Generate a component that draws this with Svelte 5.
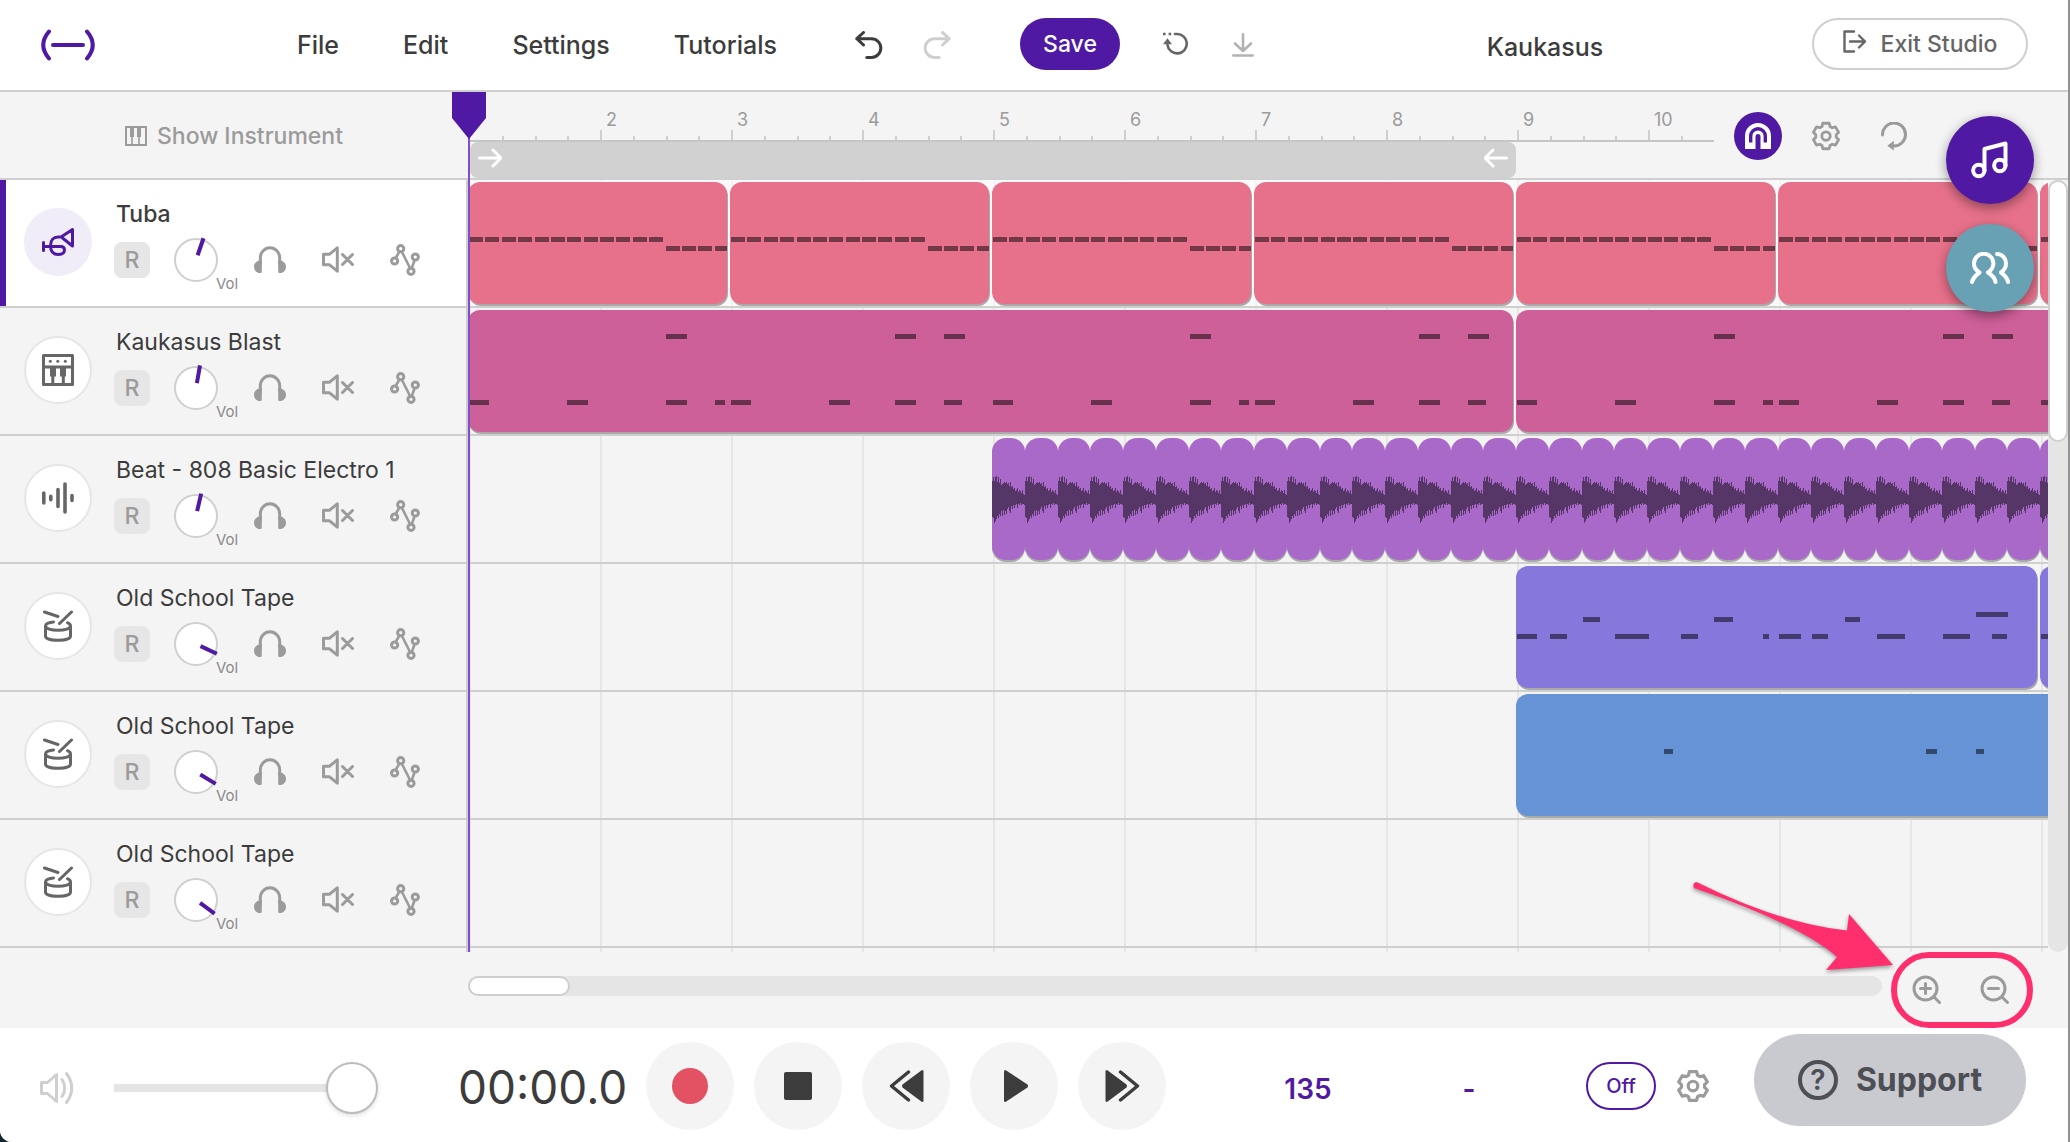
<script>
	const BAR = 131; // width of one bar in pixels

	let masterVolume = $state(100);
	let tempo = $state('135');
	let selected = $state(0);

	const menu = ['File', 'Edit', 'Settings', 'Tutorials'];

	// notes are [start in bars, width in px, top in px]
	const tubaNotes = Array.from({ length: 16 }, (_, i) => [i / 8, 14, i < 12 ? 55 : 64]);

	const blastNotes = [
		[1.5, 21, 24],
		[3.25, 21, 24],
		[3.625, 21, 24],
		[0, 20, 90],
		[0.75, 21, 90],
		[1.5, 21, 90],
		[1.875, 10, 90],
		[2, 20, 90],
		[2.75, 21, 90],
		[3.25, 21, 90],
		[3.625, 18, 90]
	];

	const tapeNotes = [
		[0, 20, 68],
		[0.25, 17, 68],
		[0.75, 34, 68],
		[1.25, 17, 68],
		[1.875, 6, 68],
		[2, 22, 68],
		[2.25, 16, 68],
		[2.75, 28, 68],
		[3.25, 27, 68],
		[3.625, 15, 68],
		[0.5, 17, 51],
		[1.5, 19, 51],
		[2.5, 15, 51],
		[3.5, 16, 46],
		[3.625, 16, 46]
	];

	function shift(notes, bars) {
		return notes.map(([at, width, top]) => [at + bars, width, top]);
	}

	const tracks = [
		{
			name: 'Tuba',
			icon: 'tuba',
			angle: 19,
			color: '#e7718b',
			clips: [0, 2, 4, 6, 8, 10, 12].map((at) => ({ at, bars: 2, notes: tubaNotes }))
		},
		{
			name: 'Kaukasus Blast',
			icon: 'synth',
			angle: 10,
			color: '#ce6099',
			clips: [0, 8].map((at) => ({ at, bars: 8, notes: [...blastNotes, ...shift(blastNotes, 4)] }))
		},
		{
			name: 'Beat - 808 Basic Electro 1',
			icon: 'audio',
			angle: 13,
			color: '#a969c9',
			clips: Array.from({ length: 33 }, (_, i) => ({ at: 4 + i / 4, bars: 0.25, wave: true }))
		},
		{
			name: 'Old School Tape',
			icon: 'drum',
			angle: 115,
			color: '#8677dc',
			clips: [8, 12].map((at) => ({ at, bars: 4, notes: tapeNotes }))
		},
		{
			name: 'Old School Tape',
			icon: 'drum',
			angle: 121,
			color: '#6692d6',
			clips: [
				{
					at: 8,
					bars: 8,
					notes: [
						[1.125, 9, 55],
						[3.125, 11, 55],
						[3.5, 8, 55]
					]
				}
			]
		},
		{ name: 'Old School Tape', icon: 'drum', angle: 126, color: '#6692d6', clips: [] }
	];

	const up = [18, 22, 18, 22, 23, 17, 22, 16, 20, 14, 15, 16, 17, 16, 17, 15, 16, 13, 17, 12, 13, 10, 11, 8, 9, 11, 7, 9, 8, 6, 9, 5, 4];
	const down = [18, 19, 24, 22, 20, 17, 19, 15, 17, 12, 17, 11, 16, 12, 15, 10, 8, 12, 14, 7, 10, 6, 9, 6, 5, 9, 5, 6, 4, 6, 5, 5, 6];
	const wavePath = up.map((u, i) => `M${i} ${61 - u}h1v${u + down[i]}h-1z`).join('');

	// ticks of the ruler, four to a bar
	const ticks = Array.from({ length: 38 }, (_, i) => i / 4);

	// gear with six soft teeth
	function gear(cx, outer, inner) {
		const pts = [];
		for (let i = 0; i < 6; i++) {
			for (const [off, r] of [[-23, inner], [-14, outer], [14, outer], [23, inner]]) {
				const a = ((i * 60 - 90 + off) * Math.PI) / 180;
				pts.push(`${(cx + r * Math.cos(a)).toFixed(1)} ${(cx + r * Math.sin(a)).toFixed(1)}`);
			}
		}
		return 'M' + pts.join('L') + 'Z';
	}
	const gearPath = gear(16, 14, 11);
</script>

{#snippet gearIcon(size)}
	<svg width={size} height={size} viewBox="0 0 32 32" class="line">
		<path d={gearPath} />
		<circle cx="16" cy="16" r="4.5" />
	</svg>
{/snippet}

{#snippet trackIcon(kind)}
	<svg width="32" height="32" viewBox="0 0 32 32" class="line">
		{#if kind === 'tuba'}
			<path d="M1.5 16.5v8M1.5 20.5H18.5C21.5 20.5 22.5 22 22.5 24C22.5 27 19.5 28.500 16 28.500C11 28.500 8.500 25 8.500 19.500C8.500 14 11.500 11 16 11H19L30.500 3.500V20L20.500 12" />
		{:else if kind === 'synth'}
			<rect x="1.5" y="1.5" width="29" height="29" />
			<path d="M1.5 13H30.5M10.8 20V30M21.3 20V30" />
			<path class="solid" d="M8 13h6v9.500h-6zM18 13h6v9.500h-6z" />
			<circle class="solid" cx="8.300" cy="7.300" r="1.500" />
			<circle class="solid" cx="15.800" cy="7.300" r="1.500" />
			<circle class="solid" cx="23.300" cy="7.300" r="1.500" />
		{:else if kind === 'audio'}
			<path stroke-width="3.6" d="M1.8 11V21M8.8 14.300V17.700M16 7.500V24.500M23 2V30M30 13.500V18.500" />
		{:else}
			<path d="M2.500 2L16 6.500M29.500 2L17.500 13.500" />
			<path d="M11.500 12C6.500 12.500 3.500 14 3.500 16C3.500 18.500 9 20.300 16 20.300S28.500 18.500 28.500 16C28.500 14.500 27 13.300 25.500 12.700M3.500 16V26C3.500 28.700 9 30.300 16 30.300S28.500 28.700 28.500 26V16" />
		{/if}
	</svg>
{/snippet}

<div class="studio">
	<header class="topbar">
		<a class="logo" href="/" aria-label="Home">
			<svg width="54" height="40" viewBox="0 0 54 40">
				<path d="M8 6.500Q-3.500 20 8 33.500M46 6.500Q57.500 20 46 33.500M12 20H42" />
			</svg>
		</a>
		<nav>
			{#each menu as item}
				<button>{item}</button>
			{/each}
		</nav>
		<div class="actions">
			<button class="undo" aria-label="Undo">
				<svg width="28" height="28" viewBox="0 0 28 28" class="line">
					<path d="M8.500 1.500L1.800 7.700L8.500 14M1.800 7.700H16.500A9.300 9.300 0 0 1 16.500 26.400H11.800" />
				</svg>
			</button>
			<button class="redo" aria-label="Redo" disabled>
				<svg width="28" height="28" viewBox="0 0 28 28" class="line">
					<path d="M19.500 1.500L26.200 7.700L19.500 14M26.200 7.700H11.500A9.300 9.300 0 0 0 11.500 26.400H16.200" />
				</svg>
			</button>
			<button class="save">Save</button>
			<button class="restore" aria-label="Revert">
				<svg width="26" height="24" viewBox="0 0 26 24" class="line">
					<path stroke-width="2.6" d="M12 2H14A9.700 9.700 0 1 1 4.500 13" />
					<path class="solid" d="M4.500 6.300L0 12.300H9ZM0 .8h2.600v2.400H0zM5.600 .8h2.600v2.400H5.600z" />
				</svg>
			</button>
			<button class="download" aria-label="Download">
				<svg width="22" height="24" viewBox="0 0 22 24" class="line">
					<path stroke-width="2.600" d="M11 1.300V18M3 10.500L11 18L19 10.500M1.300 22.500H20.700" />
				</svg>
			</button>
		</div>
		<h1>Kaukasus</h1>
		<button class="exit">
			<svg width="24" height="28" viewBox="0 0 24 28" class="line">
				<path stroke-width="2.400" d="M11 1.500H1.500V21.500H11M7 11.500H22M16 5.500L22 11.500L16 17.500" />
			</svg>
			Exit Studio
		</button>
	</header>

	<main class="workspace">
		<div class="ruler-row">
			<div class="ruler-side">
				<button class="instrument">
					<svg width="22" height="20" viewBox="0 0 22 20">
						<rect x="1" y="1" width="20" height="18" fill="none" stroke="currentColor" stroke-width="2" />
						<path fill="currentColor" d="M5 1h4v10H5zM12 1h4v10h-4zM6.200 10h1.600v9H6.200zM13.200 10h1.600v9h-1.600z" />
					</svg>
					Show Instrument
				</button>
			</div>
			<div class="ruler">
				<div class="scale">
					{#each ticks as t}
						{#if t > 0}
							<span class="tick" class:major={t % 1 === 0} style:left="{1 + t * BAR}px">
								{#if t % 1 === 0}<b>{t + 1}</b>{/if}
							</span>
						{/if}
					{/each}
				</div>
				<div class="loop" style:width="{8 * BAR - 2}px">
					<svg width="24" height="20" viewBox="0 0 24 20" class="line">
						<path d="M1.500 10H22M15 2L23 10L15 18" />
					</svg>
					<svg width="24" height="20" viewBox="0 0 24 20" class="line">
						<path d="M22.500 10H2M9 2L1 10L9 18" />
					</svg>
				</div>
			</div>
			<div class="tools">
				<button class="magnet" aria-label="Snap to grid">
					<svg width="26" height="26" viewBox="0 0 26 26">
						<path fill="#fff" d="M0 26V13a13 13 0 0 1 26 0V26H15.500V13.500a2.500 2.500 0 0 0-5 0V26Z" />
						<path fill="none" stroke="#5019a3" stroke-width="3.400" d="M5.700 19.500V13a7.300 7.300 0 0 1 14.600 0v6.500" />
					</svg>
				</button>
				<button aria-label="Grid settings">{@render gearIcon(30)}</button>
				<button aria-label="Loop">
					<svg width="27" height="29" viewBox="0 0 27 29" class="line">
						<path d="M1.500 13A11.500 11.500 0 1 1 13 24" />
						<path class="solid" d="M6.300 23.800L12.800 18.700V28.500Z" />
					</svg>
				</button>
			</div>
		</div>

		<div class="arrangement">
			<div class="rows">
				{#each tracks as track, i}
					<section class="row" class:selected={selected === i}>
						<div class="track">
							<button class="avatar" aria-label="Select {track.name}" onclick={() => (selected = i)}>
								{@render trackIcon(track.icon)}
							</button>
							<div class="info">
								<h2>{track.name}</h2>
								<div class="controls">
									<button class="rec" aria-label="Arm for recording">R</button>
									<label class="knob">
										<svg width="48" height="48" viewBox="-24 -24 48 48">
											<circle r="21" fill="#fff" stroke="#cfcfcf" stroke-width="2" />
											<line y1="-5" y2="-23" stroke="#5019a3" stroke-width="4" transform="rotate({track.angle})" />
										</svg>
										<span>Vol</span>
										<input type="range" aria-label="Volume" />
									</label>
									<button aria-label="Solo">
										<svg width="32" height="27" viewBox="0 0 32 27" class="line">
											<path d="M6.300 18V12A9.700 10.300 0 0 1 25.700 12V18" />
											<path class="solid" d="M7.800 14C3 14.500 0 17 0 20.500C0 24.500 2.500 27 6 27C7.300 27 7.800 26.500 7.800 25.500ZM24.200 14C29 14.500 32 17 32 20.500C32 24.500 29.500 27 26 27C24.700 27 24.200 26.500 24.200 25.500Z" />
										</svg>
									</button>
									<button aria-label="Mute">
										<svg width="32" height="27" viewBox="0 0 32 27" class="line">
											<path d="M1.500 8.300H7.300L15.300 1.800V25.200L7.300 18.700H1.500ZM20.500 8.500L30.500 18.500M30.500 8.500L20.500 18.500" />
										</svg>
									</button>
									<button aria-label="Automation">
										<svg width="30" height="32" viewBox="0 0 30 32" class="line">
											<path stroke-width="2.600" d="M6 13.500L9.300 7.700M12 8L20 24M21.800 24L24.500 16.500" />
											<circle cx="10.700" cy="4.700" r="3.100" />
											<circle cx="4.600" cy="17" r="3.100" />
											<circle cx="25.300" cy="13" r="3.100" />
											<circle cx="21" cy="27.300" r="3.100" />
										</svg>
									</button>
								</div>
							</div>
						</div>
						<div class="lane">
							{#each track.clips as clip}
								<div
									class="clip"
									class:beat={clip.wave}
									style:left="{clip.at * BAR}px"
									style:width="{clip.bars * BAR - (clip.wave ? 0 : 3)}px"
									style:background={track.color}
								>
									{#if clip.wave}
										<svg width="33" height="122" viewBox="0 0 33 122">
											<path d={wavePath} fill="#563666" />
										</svg>
									{:else}
										{#each clip.notes as [at, width, top]}
											<i style:left="{1 + at * BAR}px" style:width="{width}px" style:top="{top}px"></i>
										{/each}
									{/if}
								</div>
							{/each}
						</div>
					</section>
				{/each}
			</div>
			<div class="vscroll"><div></div></div>
		</div>

		<div class="playhead">
			<svg width="34" height="47" viewBox="0 0 34 47"><path d="M0 0H34V26L17 47L0 26Z" fill="#5019a3" /></svg>
		</div>
	</main>

	<div class="hscroll-row">
		<div class="hscroll"><div></div></div>
		<div class="zoom">
			<button aria-label="Zoom in">
				<svg width="30" height="30" viewBox="0 0 30 30" class="line">
					<circle cx="13.500" cy="13.500" r="11.500" />
					<path d="M22 22L27.500 27.500M13.500 8.500V18.500M8.500 13.500H18.500" />
				</svg>
			</button>
			<button aria-label="Zoom out">
				<svg width="30" height="30" viewBox="0 0 30 30" class="line">
					<circle cx="13.500" cy="13.500" r="11.500" />
					<path d="M22 22L27.500 27.500M8.500 13.500H18.500" />
				</svg>
			</button>
			<svg class="arrow" width="206" height="96" viewBox="0 0 206 96">
				<path d="M5.500 1Q90 43 156 49.500L158 33L202 84L135 89L146 76Q110 44 3 7Q1 2 5.500 1Z" fill="#ff2f6e" />
			</svg>
		</div>
	</div>

	<footer class="transport">
		<div class="master">
			<svg width="34" height="34" viewBox="0 0 34 34" class="line">
				<path d="M1.500 11.500H7.500L16.500 3.500V30.500L7.500 22.500H1.500ZM22 8.500Q27.500 17 22 25.500M26.500 2.500Q37 17 26.500 31.500" />
			</svg>
			<input type="range" aria-label="Master volume" bind:value={masterVolume} />
		</div>
		<time>00:00.0</time>
		<div class="buttons">
			<button aria-label="Record">
				<svg width="36" height="36" viewBox="0 0 36 36"><circle cx="18" cy="18" r="18" fill="#e25263" /></svg>
			</button>
			<button aria-label="Stop">
				<svg width="28" height="28" viewBox="0 0 28 28"><rect width="28" height="28" rx="2" /></svg>
			</button>
			<button aria-label="Rewind">
				<svg width="35" height="32" viewBox="0 0 35 32">
					<path d="M33 0Q34.500 0 34.500 1.500V30.500Q34.500 32 33 32L13.500 17.500Q12.500 16 13.500 14.500Z" />
					<path d="M19.500 2L2.500 16L19.500 30" fill="none" stroke="#3c3c3c" stroke-width="3.400" stroke-linecap="round" stroke-linejoin="round" />
				</svg>
			</button>
			<button aria-label="Play">
				<svg width="28" height="32" viewBox="-4 0 28 32">
					<path d="M1.500 0Q0 0 0 1.500V30.500Q0 32 1.500 32L23.500 17.500Q24.500 16 23.500 14.500Z" />
				</svg>
			</button>
			<button aria-label="Fast forward">
				<svg width="35" height="32" viewBox="0 0 35 32">
					<path d="M2 0Q.5 0 .5 1.500V30.500Q.5 32 2 32L21.500 17.500Q22.500 16 21.500 14.500Z" />
					<path d="M15.500 2L32.500 16L15.500 30" fill="none" stroke="#3c3c3c" stroke-width="3.400" stroke-linecap="round" stroke-linejoin="round" />
				</svg>
			</button>
		</div>
		<div class="params">
			<input class="tempo" aria-label="Tempo" bind:value={tempo} />
			<button class="key" aria-label="Key">-</button>
			<button class="metronome">Off</button>
			<button class="gear" aria-label="Metronome settings">{@render gearIcon(34)}</button>
		</div>
		<button class="support"><span>?</span>Support</button>
	</footer>

	<div class="floating">
		<button class="music" aria-label="Loops">
			<svg width="38" height="38" viewBox="0 0 38 38">
				<circle cx="7.800" cy="29.500" r="5.700" />
				<circle cx="28.800" cy="24.500" r="5.700" />
				<path d="M13.500 29.500V8L34.500 2.500V24.500" />
			</svg>
		</button>
		<button class="people" aria-label="Collaborators">
			<svg width="40" height="32" viewBox="0 0 40 32">
				<path d="M2 30C3 26 6 23 9.500 20.500C5.500 18 4 15 4 11.500A9.700 9.700 0 0 1 23.400 11.500C23.400 15 21.500 18 18 20.500C22 23 25 26 25.500 30M27 2C32.500 2 36 6.500 36 11.500C36 15 34.500 18 31 20.500C34.500 23 37.500 26 38 30" />
			</svg>
		</button>
	</div>
</div>

<style>
	:global(body) {
		background: #12262e;
	}

	.studio {
		position: relative;
		display: flex;
		flex-direction: column;
		box-sizing: border-box;
		min-height: 100vh;
		background: #f4f4f4;
		border-right: 2px solid #929292;
		border-bottom-left-radius: 12px;
		overflow: hidden;
		color: #3c3c3c;
		font-family: Inter, 'Liberation Sans', sans-serif;
		font-size: 23px;
		line-height: 28px;
	}

	button {
		display: flex;
		align-items: center;
		justify-content: center;
		flex-shrink: 0;
		padding: 0;
		border: 0;
		background: none;
		color: inherit;
		font: inherit;
		cursor: pointer;
	}

	svg {
		display: block;
		flex-shrink: 0;
	}

	.line {
		fill: none;
		stroke: currentColor;
		stroke-width: 3;
		stroke-linecap: round;
		stroke-linejoin: round;
	}

	.solid {
		fill: currentColor;
		stroke: none;
	}

	/* top bar */
	.topbar {
		display: flex;
		align-items: center;
		height: 90px;
		background: #fff;
		border-bottom: 2px solid #cfcfcf;
	}

	.logo {
		width: 256px;
		padding-left: 41px;
	}

	.logo path {
		fill: none;
		stroke: #5019a3;
		stroke-width: 4;
		stroke-linecap: round;
	}

	nav {
		display: flex;
		gap: 64px;
		width: 558px;
		font-size: 25px;
		font-weight: 500;
	}

	.actions {
		display: flex;
		align-items: center;
		gap: 40px;
		height: 100%;
	}

	.redo {
		color: #cfcfcf;
	}

	.save {
		width: 100px;
		height: 52px;
		margin: 0 0 2px 29px;
		border-radius: 26px;
		background: #5019a3;
		color: #fff;
		font-weight: 500;
	}

	.restore {
		margin: 0 3px 2px;
		color: #666;
	}

	.download {
		color: #b2b2b2;
	}

	h1 {
		flex: 1;
		margin: 0;
		padding: 4px 0 0 24px;
		font-size: 25px;
		font-weight: 500;
		text-align: center;
	}

	.exit {
		gap: 14px;
		box-sizing: border-box;
		width: 216px;
		height: 52px;
		margin: 0 40px 2px 0;
		border: 2px solid #cfcfcf;
		border-radius: 26px;
		color: #666;
		font-weight: 500;
	}

	/* ruler */
	.workspace {
		position: relative;
	}

	.ruler-row {
		display: flex;
		height: 86px;
		border-bottom: 2px solid #cfcfcf;
	}

	.ruler-side {
		display: flex;
		align-items: center;
		justify-content: center;
		width: 468px;
		padding-top: 2px;
	}

	.instrument {
		gap: 10px;
		color: #9b9b9b;
		font-weight: 500;
	}

	.ruler {
		flex: 1;
		min-width: 0;
		overflow: hidden;
	}

	.scale {
		position: relative;
		height: 48px;
		border-bottom: 2px solid #c6c6c6;
	}

	.tick {
		position: absolute;
		bottom: 0;
		width: 2px;
		height: 4px;
		background: #cfcfcf;
	}

	.tick.major {
		height: 10px;
	}

	.tick b {
		position: absolute;
		left: 6px;
		bottom: 8px;
		color: #9b9b9b;
		font-size: 18px;
		font-weight: 400;
		line-height: 24px;
	}

	.loop {
		display: flex;
		justify-content: space-between;
		box-sizing: border-box;
		height: 36px;
		margin-left: 2px;
		padding: 6px 8px;
		border-radius: 8px;
		background: #d1d1d1;
		color: #fff;
	}

	.tools {
		display: flex;
		align-items: center;
		gap: 20px;
		width: 334px;
		padding: 2px 0 0 20px;
		color: #9b9b9b;
	}

	.tools button {
		width: 48px;
		height: 48px;
		border-radius: 50%;
	}

	.tools .magnet {
		background: #5019a3;
	}

	/* tracks */
	.arrangement {
		display: flex;
	}

	/* panel fill and edge first, bar lines under them */
	.rows {
		flex: 1;
		min-width: 0;
		padding-bottom: 4px;
		background-image: linear-gradient(to right, #f4f4f4 466px, #cfcfcf 466px),
			linear-gradient(to right, #e6e6e6 2px, transparent 2px);
		background-size: 468px 100%, 131px 100%;
		background-position: 0 0, 469px 0;
		background-repeat: no-repeat, repeat-x;
	}

	.row {
		display: flex;
		height: 126px;
		border-bottom: 2px solid #cfcfcf;
	}

	.track {
		display: flex;
		align-items: center;
		gap: 22px;
		box-sizing: border-box;
		flex: 0 0 466px;
		padding: 0 0 3px 24px;
		background: #f4f4f4;
	}

	.avatar {
		box-sizing: border-box;
		width: 68px;
		height: 68px;
		border: 2px solid #e6e6e6;
		border-radius: 50%;
		background: #fff;
		color: #666;
	}

	.selected .track {
		padding-left: 18px;
		border-left: 6px solid #5019a3;
		background: #fff;
	}

	.selected .avatar {
		border-color: #f0ecf8;
		background: #f0ecf8;
		color: #5019a3;
	}

	h2 {
		margin: 0;
		padding-left: 2px;
		font-size: 23px;
		font-weight: 400;
	}

	.selected h2 {
		font-weight: 500;
	}

	.controls {
		display: flex;
		align-items: center;
		gap: 36px;
		height: 48px;
		margin-top: 8px;
		color: #9b9b9b;
	}

	.rec {
		width: 36px;
		height: 36px;
		border-radius: 8px;
		background: #e6e6e6;
		font-weight: 500;
	}

	.knob {
		position: relative;
		width: 48px;
		margin: 0 -2px 0 -14px;
	}

	.knob span {
		position: absolute;
		left: 44px;
		bottom: -10px;
		color: #8a8a8a;
		font-size: 15px;
		line-height: 20px;
	}

	.knob input {
		position: absolute;
		inset: 0;
		width: 48px;
		height: 48px;
		margin: 0;
		opacity: 0;
	}

	.lane {
		position: relative;
		flex: 1;
		min-width: 0;
		margin-left: 2px;
		overflow: hidden;
	}

	.selected .lane {
		background: rgb(255 255 255 / 50%);
	}

	.clip {
		position: absolute;
		top: 2px;
		height: 122px;
		border-radius: 12px;
		overflow: hidden;
		box-shadow: 1px 2px #a9a9a9;
	}

	.clip.beat {
		border-radius: 14px;
		box-shadow: 0 2px #a9a9a9;
	}

	.clip i {
		position: absolute;
		height: 5px;
		background: rgb(0 0 0 / 50%);
	}

	.vscroll {
		width: 20px;
		border-radius: 10px;
		background: #e5e5e5;
	}

	.vscroll div {
		box-sizing: border-box;
		height: 34%;
		border: 2px solid #cfcfcf;
		border-radius: 10px;
		background: #fff;
	}

	.playhead {
		position: absolute;
		top: 0;
		bottom: 0;
		left: 452px;
		width: 34px;
		background: linear-gradient(#7d4fc9, #7d4fc9) center / 2px 100% no-repeat;
		pointer-events: none;
	}

	/* horizontal scroll and zoom */
	.hscroll-row {
		display: flex;
		height: 76px;
		padding-left: 468px;
	}

	.hscroll {
		flex: 1;
		height: 20px;
		margin-top: 24px;
		border-radius: 10px;
		background: #e5e5e5;
	}

	.hscroll div {
		box-sizing: border-box;
		width: 102px;
		height: 20px;
		border: 2px solid #cfcfcf;
		border-radius: 10px;
		background: #fff;
	}

	.zoom {
		position: relative;
		display: flex;
		align-items: center;
		justify-content: center;
		gap: 38px;
		box-sizing: border-box;
		width: 142px;
		height: 76px;
		margin: 0 35px 0 9px;
		padding-right: 3px;
		border: 6px solid #ff2f6e;
		border-radius: 38px;
		color: #9b9b9b;
	}

	.arrow {
		position: absolute;
		right: 130px;
		bottom: 45px;
		filter: drop-shadow(0 2px 2px rgb(0 0 0 / 40%));
	}

	/* transport */
	.transport {
		display: flex;
		align-items: center;
		box-sizing: border-box;
		flex: 1;
		min-height: 114px;
		padding-top: 2px;
		background: #fff;
	}

	.master {
		display: flex;
		align-items: center;
		gap: 40px;
		box-sizing: border-box;
		width: 458px;
		padding: 4px 0 0 40px;
		color: #cfcfcf;
	}

	.master input {
		width: 264px;
		height: 52px;
		margin: 0;
		appearance: none;
		background: linear-gradient(#e5e5e5, #e5e5e5) left / calc(100% - 26px) 8px no-repeat;
	}

	.master input::-webkit-slider-thumb {
		box-sizing: border-box;
		width: 52px;
		height: 52px;
		appearance: none;
		border: 2px solid #bdbdbd;
		border-radius: 50%;
		background: #fff;
		box-shadow: 0 2px 4px rgb(0 0 0 / 12%);
	}

	time {
		width: 188px;
		padding-top: 2px;
		font-size: 46px;
		line-height: 56px;
		white-space: nowrap;
	}

	.buttons {
		display: flex;
		gap: 20px;
		fill: #3c3c3c;
	}

	.buttons button {
		width: 88px;
		height: 88px;
		border-radius: 50%;
		background: #f4f4f4;
	}

	.params {
		display: flex;
		align-items: center;
		gap: 73px;
		padding-left: 98px;
		color: #5019a3;
		font-weight: 600;
	}

	.tempo {
		width: 88px;
		padding: 6px 0 0;
		border: 0;
		background: none;
		color: inherit;
		font: inherit;
		font-size: 28px;
		line-height: 36px;
		text-align: center;
	}

	.key {
		width: 88px;
		padding-top: 6px;
		font-size: 28px;
	}

	.metronome {
		box-sizing: border-box;
		width: 70px;
		height: 48px;
		border: 2px solid #5019a3;
		border-radius: 24px;
		font-size: 20px;
		font-weight: 500;
	}

	.gear {
		margin-left: -53px;
		color: #9b9b9b;
	}

	.support {
		gap: 18px;
		width: 272px;
		height: 92px;
		margin: 0 42px 12px auto;
		border-radius: 46px;
		background: #c9cad0;
		color: #4d4f54;
		font-size: 32px;
		font-weight: 700;
	}

	.support span {
		box-sizing: border-box;
		width: 40px;
		height: 40px;
		border: 4px solid;
		border-radius: 50%;
		font-size: 28px;
		font-weight: 600;
		line-height: 32px;
	}

	/* floating buttons */
	.floating {
		position: absolute;
		top: 116px;
		right: 34px;
		display: flex;
		flex-direction: column;
		gap: 20px;
	}

	.floating button {
		width: 88px;
		height: 88px;
		border-radius: 50%;
		background: #5019a3;
		box-shadow: 0 4px 12px rgb(0 0 0 / 40%);
	}

	.floating .people {
		background: #68a0b4;
	}

	.floating path,
	.floating circle {
		fill: none;
		stroke: #fff;
		stroke-width: 4;
		stroke-linecap: round;
		stroke-linejoin: round;
	}
</style>
